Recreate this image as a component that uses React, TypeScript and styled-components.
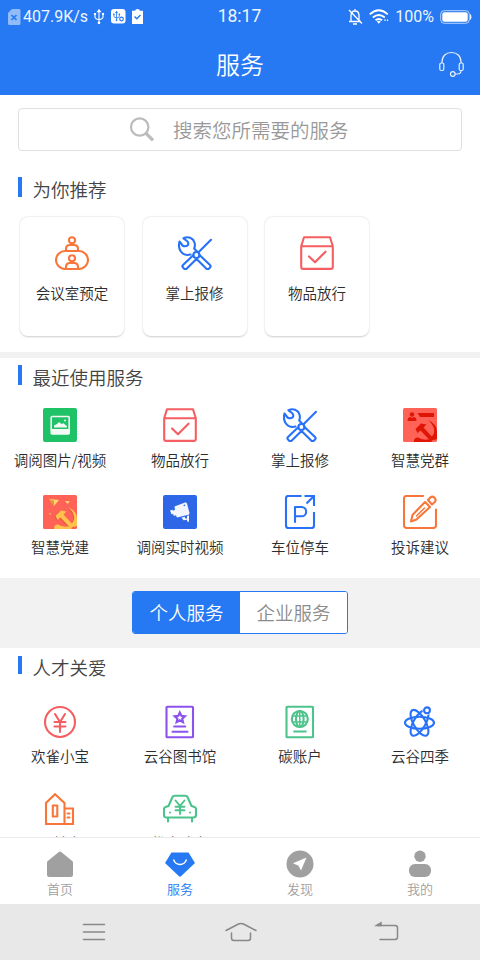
import React from 'react';
import styled, { createGlobalStyle } from 'styled-components';

const BLUE = '#2679f3';
const ICON_BLUE = '#2772f8';
const RED = '#f55f62';
const ORANGE = '#f8763a';
const GREEN = '#4cc38a';
const PURPLE = '#8c52ee';

const GlobalStyle = createGlobalStyle`
  * { box-sizing: border-box; }
  body {
    margin: 0;
    background: #fff;
    font-family: "Noto Sans CJK SC", sans-serif;
    font-weight: 350;
    color: #2c2c2c;
  }
`;

const Screen = styled.div`
  width: 480px;
  height: 960px;
  display: flex;
  flex-direction: column;
  overflow: hidden;
  background: #fff;
`;

const StatusBar = styled.div`
  height: 33px;
  flex: none;
  display: grid;
  grid-template-columns: 1fr 60px 1fr;
  align-items: center;
  padding: 0 8px 0 7px;
  background: ${BLUE};
  color: #eef5ff;
  font: 400 16px/33px Roboto, sans-serif;
`;

const StatusGroup = styled.div<{ $end?: boolean }>`
  display: flex;
  align-items: center;
  justify-content: ${p => (p.$end ? 'flex-end' : 'flex-start')};
  white-space: nowrap;
`;

const StatusIcons = styled.div`
  display: flex;
  align-items: center;
  gap: 6px;
`;

const Clock = styled.div`
  text-align: center;
  font-size: 17.5px;
`;

const Speed = styled.span`
  width: 65px;
  margin: 0 5px 0 2px;
`;

const Percent = styled.span`
  margin: 0 6px 0 6px;
`;

const Header = styled.header`
  height: 62px;
  flex: none;
  display: grid;
  grid-template-columns: 1fr auto 1fr;
  align-items: center;
  padding: 0 15px;
  background: ${BLUE};
  color: #fff;
`;

const HeaderTitle = styled.h1`
  grid-column: 2;
  margin: 0;
  font-size: 24px;
  line-height: 62px;
  font-weight: 350;
`;

const HeaderAction = styled.div`
  justify-self: end;
  display: flex;
`;

const Content = styled.main`
  flex: 1;
  min-height: 0;
  overflow: hidden;
`;

const SearchBox = styled.div`
  display: flex;
  align-items: center;
  height: 43px;
  margin: 13px 18px 0;
  padding-left: 110px;
  gap: 16px;
  border: 1px solid #e0e0e0;
  border-radius: 4px;
  color: #999;
  font-size: 19.5px;
  line-height: 41px;
`;

const SectionTitle = styled.h2<{ $bar?: number }>`
  display: flex;
  align-items: center;
  gap: 10.5px;
  margin: 0;
  padding-left: 18px;
  height: 28px;
  font-size: 18.5px;
  line-height: 28px;
  font-weight: 350;
  color: #444;
  &::before {
    content: '';
    width: 4px;
    height: ${p => p.$bar ?? 20}px;
    margin-bottom: 4px;
    background: ${BLUE};
  }
`;

const Recommend = styled.section`
  height: 201px;
  padding-top: 24px;
`;

const CardRow = styled.div`
  display: flex;
  gap: 18.500px;
  padding: 14px 0 0 20px;
`;

const Label = styled.span`
  margin-top: 7px;
  font-size: 14.5px;
  line-height: 22px;
  white-space: nowrap;
`;

const Card = styled.div`
  width: 104px;
  height: 119px;
  padding-top: 19px;
  display: flex;
  flex-direction: column;
  align-items: center;
  border-radius: 8px;
  box-shadow: 0 0.5px 2px rgba(0, 0, 0, 0.2);
  ${Label} { margin-top: 12px; }
`;

const Panel = styled.section<{ $height: number; $top: number }>`
  height: ${p => p.$height}px;
  padding-top: ${p => p.$top}px;
`;

const Divider = styled.div`
  height: 6px;
  background: #f2f2f2;
`;

const Service = styled.div`
  display: flex;
  flex-direction: column;
  align-items: center;
`;

const ServiceGrid = styled.div<{ $top: number; $labelGap: number }>`
  display: grid;
  grid-template-columns: repeat(4, 120px);
  grid-auto-rows: 87px;
  padding-top: ${p => p.$top}px;
  ${Label} { margin-top: ${p => p.$labelGap}px; }
`;

const SwitchBand = styled.div`
  height: 70px;
  display: flex;
  justify-content: center;
  padding-top: 13px;
  background: #f2f2f2;
`;

const Segmented = styled.div`
  display: flex;
  width: 216px;
  height: 43px;
  border: 1px solid ${BLUE};
  border-radius: 3px;
  overflow: hidden;
  background: #fff;
`;

const Segment = styled.div<{ $active?: boolean }>`
  flex: 1;
  text-align: center;
  font-size: 18.5px;
  line-height: 41px;
  color: ${p => (p.$active ? '#fff' : '#8c8c8c')};
  background: ${p => (p.$active ? BLUE : '#fff')};
`;

const TabBar = styled.nav`
  height: 67px;
  flex: none;
  display: grid;
  grid-template-columns: repeat(4, 1fr);
  border-top: 1px solid #e9e9e9;
  background: #fff;
`;

const Tab = styled.div<{ $active?: boolean }>`
  display: flex;
  flex-direction: column;
  align-items: center;
  padding-top: 11px;
  font-size: 13px;
  line-height: 20px;
  color: ${p => (p.$active ? BLUE : '#a0a0a0')};
`;

const SystemBar = styled.div`
  height: 56px;
  flex: none;
  display: flex;
  justify-content: space-between;
  align-items: center;
  padding: 0 78px 0 78px;
  background: #e8e8e8;
`;

type IconProps = { color?: string; children: React.ReactNode };

const LineIcon = ({ color = ICON_BLUE, children }: IconProps) => (
  <svg width="34" height="34" viewBox="0 0 34 34" fill="none" stroke={color}
    strokeWidth="2.1" strokeLinecap="round" strokeLinejoin="round">{children}</svg>
);

const MeetingIcon = () => (
  <LineIcon color={ORANGE}>
    <rect x="1" y="15" width="32" height="18" rx="9" />
    <circle cx="17" cy="4.3" r="3.1" />
    <path d="M11 15v-2q0-4 4-4h4q4 0 4 4v2" />
    <circle cx="17" cy="22.2" r="3" />
    <path d="M11 33v-2q0-4 4-4h4q4 0 4 4v2" />
  </LineIcon>
);

const RepairIcon = () => (
  <LineIcon>
    <path d="M5.500 2.300C10 0 15 2 16.500 6.500c.7 2.300.3 4.500-.3 6l3 3.300M12.500 18.500c-3.500 1-7.500-.3-9.700-3.200C1 12.800.5 9 1.500 5.500L4.500 9.500q3 1.800 5.500-.5.800-2.500-1-4L5.500 2.300" />
    <path d="M33 3.800 21 15.800" />
    <path d="M15.200 19.300 5 29q-1.200 1.300 0 2.600l1 1q1.400 1.200 2.800 0L18.500 23M21.500 19 32 29q1.200 1.300 0 2.600l-1 1q-1.400 1.200-2.800 0L18.500 23" />
    <circle cx="18.400" cy="19" r="3" />
  </LineIcon>
);

const BoxIcon = () => (
  <LineIcon color={RED}>
    <path d="M1.200 10.200 4 1.200h26l2.800 9V31q0 1.900-1.900 1.900H3.100Q1.200 32.900 1.200 31Zm0 0h31.600" />
    <path d="m9 20.500 6 5.700 10.500-10.500" strokeWidth="2.200" />
  </LineIcon>
);

const PhotoIcon = () => (
  <svg width="34" height="34" viewBox="0 0 34 34">
    <rect width="34" height="34" rx="2" fill="#20c268" />
    <rect x="8.200" y="8.500" width="18" height="17.500" rx="1" fill="none" stroke="#f3faf5" strokeWidth="1.600" />
    <path d="M8 21h18.500v5H8z" fill="#f3faf5" />
    <path d="M11 19.500v-2l3-1.500 2-2 2.500 2 2-.8 3.500 3v1.300Z" fill="#f3faf5" />
    <circle cx="22" cy="12.500" r="1" fill="#f3faf5" />
  </svg>
);

const HammerSickle = ({ color }: { color: string }) => (
  <g fill={color}>
    <path d="M12.500 21 18 15.500l5.500 1-3 3L31 31l-3 2.500L17.500 22.500l-3 2.500Z" />
    <path d="M25 12q9 4 9 12v7l-3 1-3-3q4-3 3-8-1-5-6-9Z" />
    <path d="M11 32q1-3 4-2.500 4 3 11 1.800l3 2.700H11Z" />
  </g>
);

const PartyGroupIcon = () => (
  <svg width="34" height="34" viewBox="0 0 34 34">
    <rect width="34" height="34" rx="1.500" fill="#ff6257" />
    <g fill="#df1505">
      <circle cx="9" cy="6.500" r="2.200" />
      <path d="M4.500 13q0-4 3-4l1.500 1 1.500-1q3 0 3 4ZM14.500 5H31v4H17Z" />
    </g>
    <HammerSickle color="#df1505" />
  </svg>
);

const PartyBuildIcon = () => (
  <svg width="34" height="34" viewBox="0 0 34 34">
    <rect width="34" height="34" rx="1.500" fill="#ff6257" />
    <path d="m6 4 10 1-5 6Zm16 2 5 .3-2.500 2.700ZM6 18l2 .5L7 20Z" fill="#ffd36e" />
    <path d="m6 4 5 7v-5Z" fill="#e3963b" />
    <g transform="translate(-.8 .8)"><HammerSickle color="#e2593c" /></g>
    <HammerSickle color="#ffc24b" />
  </svg>
);

const CameraIcon = () => (
  <svg width="34" height="34" viewBox="0 0 34 34">
    <rect width="34" height="34" rx="2" fill="#2d67e8" />
    <g fill="#f3f5ff">
      <path d="M11.500 11.500 22 7.500q1.500-.3 2 1L26.500 18q0 1.200-1 1.700L14 22.500l-1.200-2.300-1.800.8-1-2-1.500.3L7 15.500l2.500-.8.800 1 1.700-1Z" />
      <path d="m18.500 22.800 3-1 1 1.700h1.500V21l2-.8V27l-2-.7v-1.500l-3.500.5Z" />
    </g>
    <path d="m20.500 10 1.500-.4.300 1.200-1.500.4Z" fill="#2d67e8" />
  </svg>
);

const ParkingIcon = () => (
  <LineIcon>
    <path d="M18.500 1H5.500Q3 1 3 3.500v27Q3 33 5.500 33H28.500Q31 33 31 30.500V17" strokeLinecap="butt" />
    <path d="M21.500 1H31v10M31 1 23.500 8.500" strokeLinecap="butt" strokeLinejoin="miter" />
    <path d="M12 27V12h6.500a4.600 4.600 0 0 1 0 9.300H12" strokeWidth="2.100" />
  </LineIcon>
);

const ComplaintIcon = () => (
  <LineIcon color={ORANGE}>
    <path d="M20 1H3.500Q1 1 1 3.500v27Q1 33 3.500 33h27q2.500 0 2.500-2.500V14.500" />
    <path d="m22 7 5 5-13.500 12.500L8 26.500l1.500-6.500Z" />
    <path d="m25 5 2.500-2.700q2-1.500 4 .5t.5 4L29 9.500Z" />
    <path d="M13.500 21 21.500 13" strokeWidth="1.500" />
  </LineIcon>
);

const CoinIcon = () => (
  <LineIcon color={RED}>
    <circle cx="17" cy="17" r="15" />
    <path d="m12 9 5 8 5-8M17 17v10M11.500 17h11M11.500 21.500h11" />
  </LineIcon>
);

const LibraryIcon = () => (
  <LineIcon color={PURPLE}>
    <rect x="3.500" y="1.800" width="26.500" height="30.500" rx=".8" />
    <path d="m16.800 7.500 1.500 3.300 3.600.4-2.700 2.400.8 3.600-3.200-1.900-3.200 1.900.8-3.600-2.700-2.400 3.600-.4Z" strokeLinejoin="miter" />
    <path d="M11.200 21.500h11M9.500 26.700h15" />
  </LineIcon>
);

const CarbonIcon = () => (
  <LineIcon color={GREEN}>
    <rect x="3.500" y="1.800" width="26.500" height="30.500" rx=".8" />
    <circle cx="16.800" cy="14" r="8" />
    <ellipse cx="16.800" cy="14" rx="3.800" ry="8" />
    <path d="M16.800 6v16M9.600 11h14.500M9.600 17h14.500" strokeWidth="1.500" />
    <path d="M11.200 26.500h11.500" />
  </LineIcon>
);

const SeasonsIcon = () => (
  <LineIcon>
    <ellipse cx="16.500" cy="17.800" rx="14.500" ry="6" />
    <ellipse cx="16.500" cy="17.800" rx="14.500" ry="6" transform="rotate(60 16.500 17.800)" />
    <ellipse cx="16.500" cy="17.800" rx="14.500" ry="6" transform="rotate(120 16.500 17.800)" />
    <circle cx="24" cy="5.300" r="4.500" fill="#fff" stroke="none" />
    <circle cx="24" cy="5.300" r="2.900" />
  </LineIcon>
);

const HouseIcon = () => (
  <LineIcon color={ORANGE}>
    <path d="M3 32V11l9-8.800L21.500 11v21ZM21.500 16.500H30V32h-8.500" strokeLinejoin="miter" />
    <rect x="9.800" y="13.500" width="4.500" height="11" />
    <path d="M24.500 21.500h2M24.500 25.500h2" />
  </LineIcon>
);

const CarIcon = () => (
  <LineIcon color={GREEN}>
    <path d="M5.500 14 9.500 5Q10 3.700 11.500 3.700h11q1.500 0 2 1.300L28.500 14l3 1q1.500.5 1.500 2v6q0 2.500-2.500 2.500h-27Q1 25.500 1 23v-6q0-1.500 1.500-2ZM5 25.500v4M29 25.500v4" />
    <path d="m12.500 8.500 4.500 5.500 4.500-5.500M17 14v8M12.500 14.800h9M12.500 18.300h9M7 20.500h.1M27 20.500h.1" strokeWidth="1.900" />
  </LineIcon>
);

const SearchIcon = () => (
  <svg width="28" height="28" viewBox="0 0 28 28" fill="none" stroke="#bcbcbc">
    <circle cx="10.700" cy="11" r="8.700" strokeWidth="2.200" />
    <path d="m16.700 17 7.300 7.300" strokeWidth="3.300" />
  </svg>
);

const HeadsetIcon = () => (
  <svg width="27" height="27" viewBox="0 0 27 27" fill="none" stroke="#e8f1ff" strokeWidth="1.200">
    <path d="M4 12v-1C4 5 8 1.500 13.500 1.500S23 5 23 11v1" />
    <rect x="1.800" y="12" width="4" height="7.500" rx="1.500" />
    <rect x="21.200" y="12" width="4" height="7.500" rx="1.500" />
    <circle cx="14.800" cy="23" r="2.300" />
    <path d="M23 19.500q0 3.500-3.500 3.500H17" />
  </svg>
);

const SimIcon = () => (
  <svg width="14" height="16" viewBox="0 0 14 16">
    <path d="M5 0h7q1.500 0 1.500 1.500v13Q13.500 16 12 16H2.500Q1 16 1 14.500V4Z" fill="#92bcf9" />
    <path d="m4.500 6 5 5m0-5-5 5" stroke={BLUE} strokeWidth="1.700" />
  </svg>
);

const UsbPath = () => (
  <>
    <path d="M6 2v12M2 5v3q0 2 4 2.500M10 5v3q0 2-4 2.500" fill="none" />
    <path d="m6 .800 1.400 2H4.600ZM1.500 4.500h1v1h-1Zm8 0h1v1h-1ZM6 13a.8.8 0 1 1 0 1.600A.8.8 0 0 1 6 13" />
  </>
);

const UsbIcon = () => (
  <svg width="12" height="16" viewBox="0 0 12 16" fill="#fff" stroke="#fff" strokeWidth="1.100"><UsbPath /></svg>
);

const UsbDebugIcon = () => (
  <svg width="15" height="15" viewBox="0 0 15 15">
    <rect width="14.500" height="14.500" rx="3" fill="#fff" />
    <g transform="translate(1.500 1.800) scale(.68)" fill={BLUE} stroke={BLUE} strokeWidth="1.300"><UsbPath /></g>
    <circle cx="10.500" cy="10" r="1.800" fill="#fff" stroke={BLUE} strokeWidth="1.200" />
  </svg>
);

const ClipIcon = () => (
  <svg width="11" height="15" viewBox="0 0 11 15">
    <path d="M0 1.800h3Q3.500 0 5.500 0T8 1.800h3V15H0Z" fill="#fff" />
    <path d="m2.500 7.500 2.300 2.200L8.500 6" fill="none" stroke={BLUE} strokeWidth="1.400" />
  </svg>
);

const MuteIcon = () => (
  <svg width="15" height="16" viewBox="0 0 15 16" fill="none" stroke="#fff" strokeWidth="1.300">
    <path d="M3 12V6.500Q3 2 7 2t4 4.500V12M1 12.500h12M7 0v2M5 15h4M1 1l13 13.500" />
  </svg>
);

const WifiIcon = () => (
  <svg width="20" height="15" viewBox="0 0 20 15" fill="none" stroke="#fff" strokeWidth="1.800">
    <path d="M.8 5.300q9-8 18 0M3.800 8.500q6-5 12 0M6.500 11.300q3.300-2.600 6.600 0" />
    <path d="m7.800 12.600 2 2.200 2-2.200q-2-1.600-4 0Z" fill="#fff" stroke="none" />
    <path d="M16 10.500v1.500m2.500-1.500v1.500" strokeWidth="1.200" />
  </svg>
);

const BatteryIcon = () => (
  <svg width="32" height="14" viewBox="0 0 32 14">
    <rect x=".7" y=".7" width="28.600" height="12.600" rx="3.500" fill="none" stroke="#b8d3fb" />
    <rect x="2.300" y="2.300" width="25.400" height="9.400" rx="2" fill="#fff" />
    <path d="M30.500 4.500q1.200 2.500 0 5Z" fill="#fff" stroke="#fff" strokeWidth=".7" />
  </svg>
);

const TabIcon = ({ kind }: { kind: string }) => (
  <svg width="32" height="30" viewBox="0 0 32 30" fill="currentColor">
    {kind === 'home' && <path d="M3 13.500q0-1 .8-1.600L14.800 3q1.200-.9 2.400 0l11 8.900q.8.600.8 1.600V26q0 2-2 2H5q-2 0-2-2Z" />}
    {kind === 'service' && (
      <>
        <path d="M7.500 3.500h17L31 14 17 27.300q-1 .8-2 0L1 14Z" />
        <path d="M9.500 10.500q1.800 5 6.500 5t6.500-5" fill="none" stroke="#fff" strokeWidth="1.400" />
      </>
    )}
    {kind === 'discover' && (
      <>
        <circle cx="16" cy="15" r="13.500" />
        <path d="M22.500 8.500 17 21.500l-2.500-4.700L9 14.200Z" fill="#fff" />
      </>
    )}
    {kind === 'me' && (
      <>
        <circle cx="16" cy="7.300" r="5.700" />
        <rect x="5" y="15" width="22" height="13" rx="6" />
      </>
    )}
  </svg>
);

const MenuKey = () => (
  <svg width="32" height="28" viewBox="0 0 32 28" stroke="#888" strokeWidth="1.500" strokeLinecap="round">
    <path d="M5.500 6.500h21M5.500 14h21M5.500 21.500h21" />
  </svg>
);

const HomeKey = () => (
  <svg width="34" height="28" viewBox="0 0 34 28" fill="none" stroke="#888" strokeWidth="1.500" strokeLinecap="round">
    <path d="M1 12.500 13.500 6q2.500-1.200 5 0L31 12.500M6.500 15v5q0 2.500 2.500 2.500h14q2.500 0 2.500-2.500v-5" />
  </svg>
);

const BackKey = () => (
  <svg width="28" height="28" viewBox="0 0 28 28" fill="none" stroke="#888" strokeWidth="1.500" strokeLinecap="round">
    <path d="M3.500 7.500H21q2.500 0 2.500 2.500v9q0 2.500-2.500 2.500H6" />
    <path d="M2.500 7.500 7 4.800v2.700Z" fill="#888" />
  </svg>
);

const recommended = [
  { label: '会议室预定', icon: <MeetingIcon /> },
  { label: '掌上报修', icon: <RepairIcon /> },
  { label: '物品放行', icon: <BoxIcon /> },
];

const recent = [
  { label: '调阅图片/视频', icon: <PhotoIcon /> },
  { label: '物品放行', icon: <BoxIcon /> },
  { label: '掌上报修', icon: <RepairIcon /> },
  { label: '智慧党群', icon: <PartyGroupIcon /> },
  { label: '智慧党建', icon: <PartyBuildIcon /> },
  { label: '调阅实时视频', icon: <CameraIcon /> },
  { label: '车位停车', icon: <ParkingIcon /> },
  { label: '投诉建议', icon: <ComplaintIcon /> },
];

const care = [
  { label: '欢雀小宝', icon: <CoinIcon /> },
  { label: '云谷图书馆', icon: <LibraryIcon /> },
  { label: '碳账户', icon: <CarbonIcon /> },
  { label: '云谷四季', icon: <SeasonsIcon /> },
  { label: '公益房', icon: <HouseIcon /> },
  { label: '优惠购车', icon: <CarIcon /> },
];

const tabs = [
  { label: '首页', kind: 'home' },
  { label: '服务', kind: 'service' },
  { label: '发现', kind: 'discover' },
  { label: '我的', kind: 'me' },
];

type ServicesProps = { items: typeof recent; top: number; labelGap?: number };

const Services = ({ items, top, labelGap = 6.5 }: ServicesProps) => (
  <ServiceGrid $top={top} $labelGap={labelGap}>
    {items.map(item => (
      <Service key={item.label}>{item.icon}<Label>{item.label}</Label></Service>
    ))}
  </ServiceGrid>
);

export default function App() {
  return (
    <Screen>
      <GlobalStyle />
      <StatusBar>
        <StatusGroup>
          <SimIcon />
          <Speed>407.9K/s</Speed>
          <StatusIcons><UsbIcon /><UsbDebugIcon /><ClipIcon /></StatusIcons>
        </StatusGroup>
        <Clock>18:17</Clock>
        <StatusGroup $end>
          <StatusIcons><MuteIcon /><WifiIcon /></StatusIcons>
          <Percent>100%</Percent>
          <BatteryIcon />
        </StatusGroup>
      </StatusBar>
      <Header>
        <HeaderTitle>服务</HeaderTitle>
        <HeaderAction><HeadsetIcon /></HeaderAction>
      </Header>
      <Content>
        <SearchBox><SearchIcon />搜索您所需要的服务</SearchBox>
        <Recommend>
          <SectionTitle>为你推荐</SectionTitle>
          <CardRow>
            {recommended.map(item => (
              <Card key={item.label}>{item.icon}<Label>{item.label}</Label></Card>
            ))}
          </CardRow>
        </Recommend>
        <Divider />
        <Panel $height={220} $top={5}>
          <SectionTitle>最近使用服务</SectionTitle>
          <Services items={recent} top={17} />
        </Panel>
        <SwitchBand>
          <Segmented>
            <Segment $active>个人服务</Segment>
            <Segment>企业服务</Segment>
          </Segmented>
        </SwitchBand>
        <Panel $height={220} $top={5}>
          <SectionTitle $bar={18}>人才关爱</SectionTitle>
          <Services items={care} top={24} labelGap={5.5} />
        </Panel>
      </Content>
      <TabBar>
        {tabs.map(tab => (
          <Tab key={tab.kind} $active={tab.kind === 'service'}>
            <TabIcon kind={tab.kind} />
            {tab.label}
          </Tab>
        ))}
      </TabBar>
      <SystemBar><MenuKey /><HomeKey /><BackKey /></SystemBar>
    </Screen>
  );
}
